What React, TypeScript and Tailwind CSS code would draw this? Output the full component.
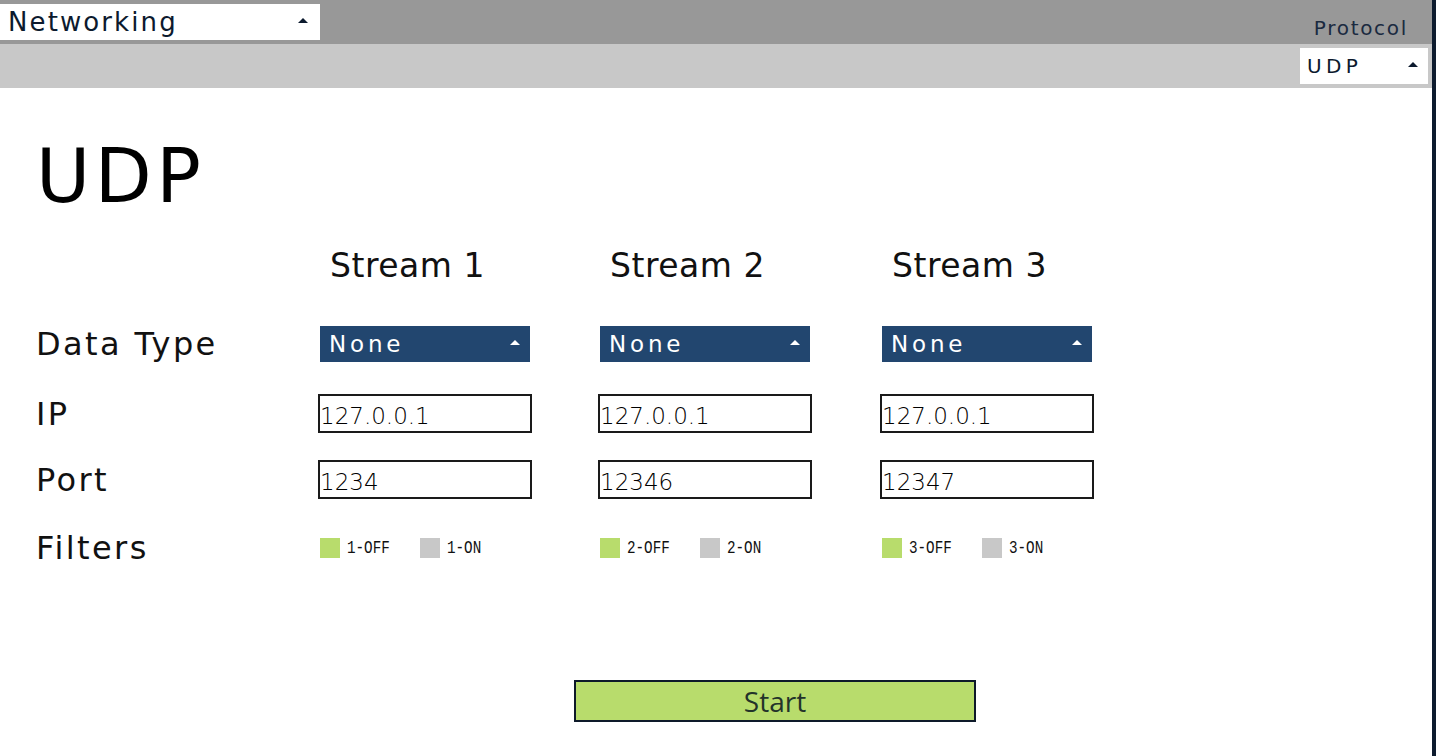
import React from 'react';

const streams = [
  { id: 1, ip: '127.0.0.1', port: '1234', width: 'w-[280px]' },
  { id: 2, ip: '127.0.0.1', port: '12346', width: 'w-[282px]' },
  { id: 3, ip: '127.0.0.1', port: '12347', width: 'w-[282px]' },
];

const Caret: React.FC<{ className?: string }> = ({ className }) => (
  <svg width="10" height="5" viewBox="0 0 10 5" className={className}>
    <polygon points="0,5 10,5 5,0" fill="currentColor" />
  </svg>
);

const RowLabel: React.FC<{ children: React.ReactNode }> = ({ children }) => (
  <div className="w-[284px] shrink-0 text-[32px] leading-none tracking-[2.4px] text-[#111]">{children}</div>
);

const FilterTag: React.FC<{ label: string }> = ({ label }) => (
  <span
    className="inline-block origin-left scale-x-[0.75] text-[19px] leading-none text-[#111]"
    style={{ fontFamily: '"Liberation Mono", monospace' }}
  >
    {label}
  </span>
);

export default function App() {
  return (
    <div
      className="w-[1436px] h-[756px] bg-white border-r-4 border-[#0d1b2e] overflow-hidden flex flex-col"
      style={{ fontFamily: '"DejaVu Sans", sans-serif' }}
    >
      {/* Top bar */}
      <div className="h-[44px] bg-[#989898] flex items-start justify-between pt-1 shrink-0">
        <div className="w-[320px] h-9 bg-white flex items-center justify-between pl-2 pr-3 text-[#0c1a2e]">
          <span className="text-[26px] leading-none tracking-[2.1px]">Networking</span>
          <Caret className="mb-1" />
        </div>
        <span className="mt-[14px] mr-[24px] text-[20px] leading-none tracking-[1.7px] text-[#1a2a40]">Protocol</span>
      </div>

      {/* Second bar */}
      <div className="h-[44px] bg-[#c8c8c8] flex items-start justify-end pt-1 pr-1 shrink-0">
        <div className="w-32 h-9 bg-white flex items-center justify-between pl-[7px] pr-[10px] text-[#0c1a2e]">
          <span className="text-[20px] leading-none tracking-[4.3px]">UDP</span>
          <Caret className="mb-1" />
        </div>
      </div>

      {/* Content */}
      <div className="pl-[36px] flex flex-col">
        <h1 className="mt-[51px] text-[74px] leading-none tracking-[4.5px] text-black">UDP</h1>

        {/* Stream headers */}
        <div className="mt-[36px] flex">
          <div className="w-[284px] shrink-0" />
          {streams.map((s) => (
            <div key={s.id} className={`${s.width} shrink-0 pl-[10px] text-[33px] leading-none tracking-[0.5px] text-[#111]`}>
              Stream {s.id}
            </div>
          ))}
        </div>

        {/* Data Type */}
        <div className="mt-[44px] h-9 flex items-center">
          <RowLabel>Data Type</RowLabel>
          {streams.map((s) => (
            <div key={s.id} className={`${s.width} shrink-0`}>
              <div className="w-[210px] h-9 bg-[#22466f] flex items-center justify-between pl-[9px] pr-[10px] text-white">
                <span className="text-[23px] leading-none tracking-[3.8px]">None</span>
                <Caret className="mb-1" />
              </div>
            </div>
          ))}
        </div>

        {/* IP */}
        <div className="mt-[32px] h-[39px] flex items-center">
          <RowLabel>IP</RowLabel>
          {streams.map((s) => (
            <div key={s.id} className={`${s.width} shrink-0`}>
              <div className="-ml-[2px] w-[214px] h-[39px] border-2 border-[#1a1a1a] pt-[9px] text-[23px] leading-none font-extralight text-black">
                {s.ip}
              </div>
            </div>
          ))}
        </div>

        {/* Port */}
        <div className="mt-[27px] h-[39px] flex items-center">
          <RowLabel>Port</RowLabel>
          {streams.map((s) => (
            <div key={s.id} className={`${s.width} shrink-0`}>
              <div className="-ml-[2px] w-[214px] h-[39px] border-2 border-[#1a1a1a] pt-[9px] text-[23px] leading-none font-extralight text-black">
                {s.port}
              </div>
            </div>
          ))}
        </div>

        {/* Filters */}
        <div className="mt-[31px] h-9 flex items-center">
          <RowLabel>Filters</RowLabel>
          {streams.map((s) => (
            <div key={s.id} className={`${s.width} shrink-0 flex items-center`}>
              <div className="w-[100px] flex items-center gap-[7px]">
                <span className="w-5 h-5 bg-[#b8dc6c]" />
                <FilterTag label={`${s.id}-OFF`} />
              </div>
              <div className="flex items-center gap-[7px]">
                <span className="w-5 h-5 bg-[#c8c8c8]" />
                <FilterTag label={`${s.id}-ON`} />
              </div>
            </div>
          ))}
        </div>

        {/* Start */}
        <button
          type="button"
          className="mt-[114px] ml-[538px] w-[402px] h-[42px] border-2 border-[#0e1a2a] bg-[#b8dc6c] flex items-center justify-center text-[28px] leading-none text-[#23332a]"
          style={{ fontFamily: '"Open Sans", sans-serif' }}
        >
          Start
        </button>
      </div>
    </div>
  );
}
